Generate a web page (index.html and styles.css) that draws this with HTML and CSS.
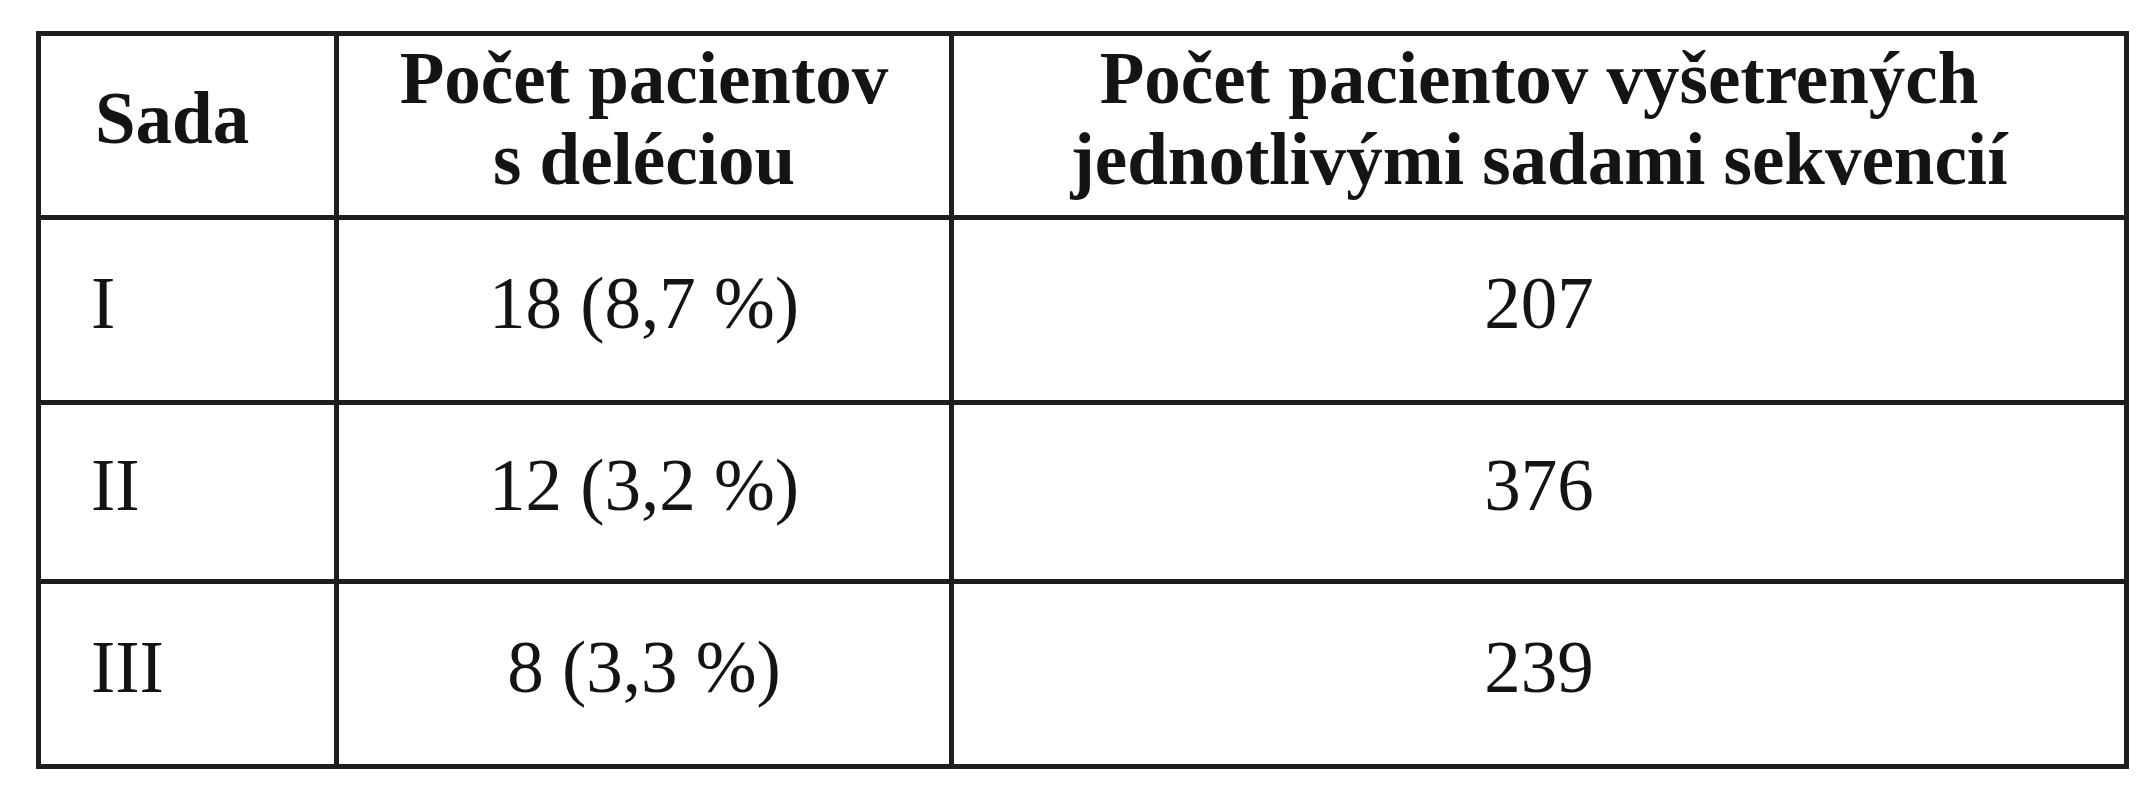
FILE: index.html
```html
<!DOCTYPE html>
<html lang="sk">
<head>
<meta charset="utf-8">
<title>Tabuľka</title>
<link rel="stylesheet" href="styles.css">
</head>
<body>
<div class="table" role="table">
  <div class="cell head first" role="columnheader">Sada</div>
  <div class="cell head" role="columnheader">Počet pacientov<br>s deléciou</div>
  <div class="cell head" role="columnheader">Počet pacientov vyšetrených<br>jednotlivými sadami sekvencií</div>

  <div class="cell first" role="cell">I</div>
  <div class="cell" role="cell">18 (8,7 %)</div>
  <div class="cell" role="cell">207</div>

  <div class="cell first" role="cell">II</div>
  <div class="cell" role="cell">12 (3,2 %)</div>
  <div class="cell" role="cell">376</div>

  <div class="cell first" role="cell">III</div>
  <div class="cell" role="cell">8 (3,3 %)</div>
  <div class="cell" role="cell">239</div>
</div>
</body>
</html>
```

FILE: styles.css
```css
html, body {
  margin: 0;
  padding: 0;
  background: #ffffff;
}

body {
  font-family: "Liberation Serif", "Times New Roman", serif;
  color: #141414;
}

.table {
  display: grid;
  grid-template-columns: 293px 610px 1170px;
  grid-template-rows: 179px 180px 174px 180px;
  gap: 5px;
  padding: 5px;
  background: #1e1e1e;
  width: max-content;
  margin: 31px 0 0 36px;
}

.cell {
  background: #ffffff;
  display: flex;
  align-items: center;
  justify-content: center;
  text-align: center;
  font-size: 73px;
  line-height: 81px;
  padding-bottom: 14px;
  box-sizing: border-box;
}

.cell.first {
  justify-content: flex-start;
  text-align: left;
  padding-left: 50px;
}

.cell.head {
  font-weight: bold;
}

.cell.head.first {
  padding-left: 54px;
}
```
